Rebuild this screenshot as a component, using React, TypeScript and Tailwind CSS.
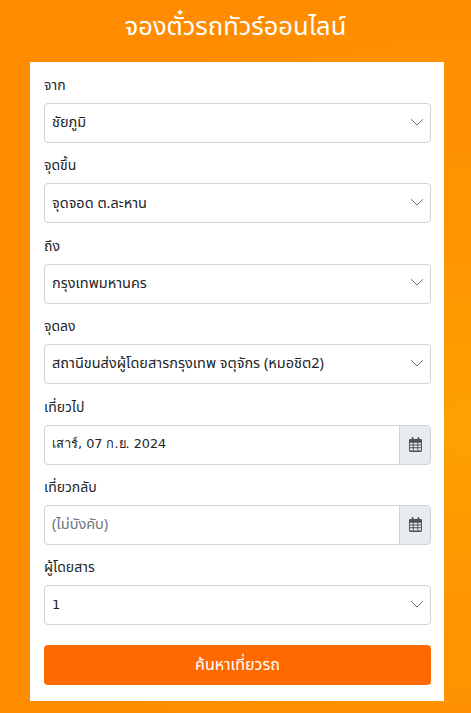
import React from "react";

const font = "font-['Noto_Sans','Noto_Sans_Thai',Roboto,sans-serif]";

function Chevron() {
  return (
    <svg className="w-[12px] h-[12px] text-[#666b70]" viewBox="0 0 12 12" fill="none" stroke="currentColor" strokeWidth="1" strokeLinecap="round" strokeLinejoin="round">
      <path d="M0.500 2.500L6 8l5.500-5.500" />
    </svg>
  );
}

function Cal() {
  return (
    <svg className="w-[13px] h-[15px] text-[#495057]" viewBox="0 0 448 512" fill="currentColor">
      <path d="M152 64h144V24c0-13 11-24 24-24h8c13 0 24 11 24 24v40h48c26.500 0 48 21.500 48 48v352c0 26.500-21.500 48-48 48H48c-26.500 0-48-21.500-48-48V112c0-26.500 21.500-48 48-48h48V24C96 11 107 0 120 0h8c13 0 24 11 24 24v40zM32 192v64h96v-64H32zm128 0v64h128v-64H160zm160 0v64h96v-64h-96zM32 288v64h96v-64H32zm128 0v64h128v-64H160zm160 0v64h96v-64h-96zM32 384v64c0 8.800 7.200 16 16 16h80v-80H32zm128 0v80h128v-80H160zm160 0v80h80c8.800 0 16-7.200 16-16v-64h-96z" />
    </svg>
  );
}

function Select({ label, value, latin }: { label: string; value: string; latin?: boolean }) {
  return (
    <div className="flex flex-col">
      <label className="text-[14px] leading-[21px] text-[#212529] mb-[8px]">{label}</label>
      <div className="h-[40px] flex items-center justify-between pl-[7px] pr-[7px] pb-[1px] bg-white border border-[#ced4da] rounded-[4px] text-[14.500px] text-[#212529]">
        <span className={latin ? "font-['DejaVu_Sans','Noto_Sans',sans-serif] text-[13px]" : "-mt-[1px]"}>{value}</span>
        <Chevron />
      </div>
    </div>
  );
}

function DateField({ label, value, muted }: { label: string; value: string; muted?: boolean }) {
  return (
    <div className="flex flex-col">
      <label className="text-[14px] leading-[21px] text-[#212529] mb-[8px]">{label}</label>
      <div className="h-[40px] flex">
        <div className={`flex-1 flex items-center pl-[7px] pb-[2px] bg-white border border-[#ced4da] rounded-l-[4px] ${muted ? "text-[14.500px] text-[#6c757d]" : "text-[#212529] font-['DejaVu_Sans','Noto_Sans',sans-serif] text-[12.800px]"}`}>
          {value}
        </div>
        <div className="w-[32px] -ml-px flex items-center justify-center bg-[#e9ecef] border border-[#ced4da] rounded-r-[4px]">
          <Cal />
        </div>
      </div>
    </div>
  );
}

export default function App() {
  return (
    <div className={`w-[471px] h-[713px] overflow-hidden bg-[radial-gradient(ellipse_at_100%_60%,#ffa000_0%,#ff9400_35%,#ff8c00_75%)] ${font}`}>
      <h1 className="h-[62px] pb-[12px] flex items-center justify-center text-white text-[25.500px] font-normal">จองตั๋วรถทัวร์ออนไลน์</h1>
      <div className="ml-[30px] w-[414px] bg-white pl-[14px] pr-[13px] pt-[12px] h-[639px] flex flex-col gap-[11.400px]">
        <Select label="จาก" value="ชัยภูมิ" />
        <Select label="จุดขึ้น" value="จุดจอด ต.ละหาน" />
        <Select label="ถึง" value="กรุงเทพมหานคร" />
        <Select label="จุดลง" value="สถานีขนส่งผู้โดยสารกรุงเทพ จตุจักร (หมอชิต2)" />
        <DateField label="เที่ยวไป" value="เสาร์, 07 ก.ย. 2024" />
        <DateField label="เที่ยวกลับ" value="(ไม่บังคับ)" muted />
        <Select label="ผู้โดยสาร" value="1" latin />
        <button className="mt-[8.500px] h-[40px] rounded-[4px] bg-[#ff6a00] text-white text-[16px] pb-[2px]">ค้นหาเที่ยวรถ</button>
      </div>
    </div>
  );
}
